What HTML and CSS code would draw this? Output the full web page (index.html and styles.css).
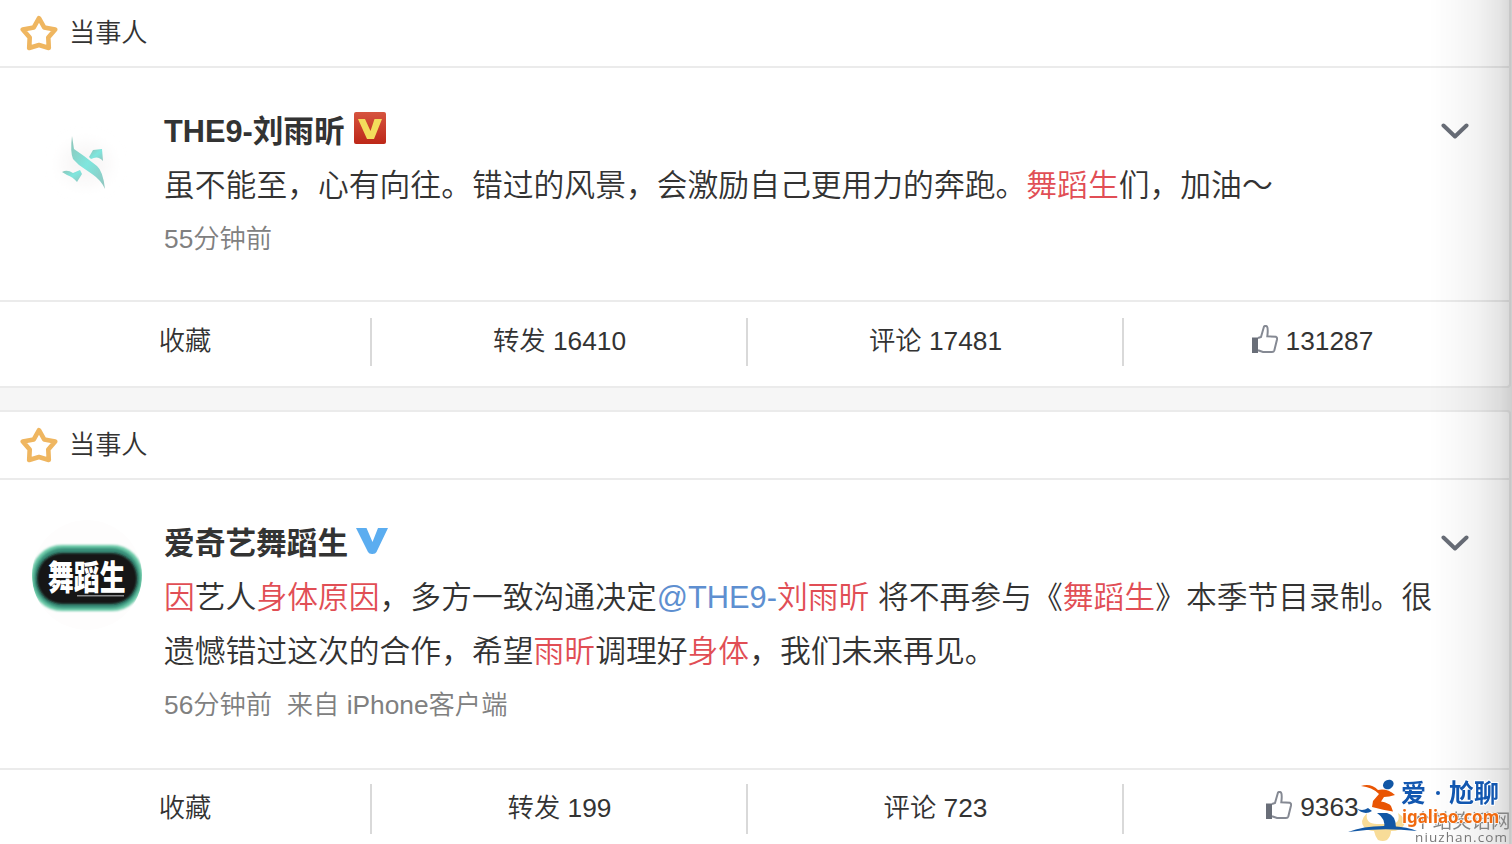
FILE: index.html
```html
<!DOCTYPE html>
<html lang="zh-CN">
<head>
    <meta charset="UTF-8">
    <meta name="viewport" content="width=device-width, initial-scale=1.0">
    <title>微博</title>
    <link rel="stylesheet" href="styles.css">
</head>
<body>

    <!-- Shared icons -->
    <svg class="symbols" width="0" height="0">
        <symbol id="star" viewBox="0 0 38 36">
            <path d="M19 3.2 L24.2 12.4 L35.2 14.6 L28.3 22.6 L28.8 33 L19 30 L9.2 33 L9.7 22.6 L2.8 14.6 L13.8 12.4 Z" fill="none" stroke="#efb660" stroke-width="4.6" stroke-linejoin="round"/>
        </symbol>
        <symbol id="chevron" viewBox="0 0 28 16">
            <path d="M2.5 2.5 L14 13.5 L25.5 2.5" fill="none" stroke="#696e78" stroke-width="4" stroke-linecap="round" stroke-linejoin="round"/>
        </symbol>
        <symbol id="like" viewBox="0 0 26 28">
            <path d="M0 12.5 H6 V28 H0 Z" fill="#696e78"/>
            <path d="M6 13 L9 12 L12 1.5 Q13.5 0.3 15 1.5 Q16.3 3.5 15.3 11.3 L24 11.8 Q25.4 12.5 25 14.5 L22.3 25.5 Q21.8 27 20 27 H11 L6 25.2" fill="#fff" stroke="#858993" stroke-width="2"/>
        </symbol>
    </svg>

    <div class="feed">
        <div class="card">
            <div class="card-title">
                <svg class="star"><use href="#star"/></svg>
                <span>当事人</span>
            </div>
            <div class="card-body">
                <svg class="avatar" viewBox="0 0 110 110">
                    <defs>
                        <linearGradient id="teal" x1="0" y1="0" x2="1" y2="1">
                            <stop offset="0" stop-color="#8fc4b8"/>
                            <stop offset="0.5" stop-color="#7fe6de"/>
                            <stop offset="1" stop-color="#93c4bd"/>
                        </linearGradient>
                        <filter id="soft"><feGaussianBlur stdDeviation="0.7"/></filter>
                        <filter id="haze" x="-50%" y="-50%" width="200%" height="200%"><feGaussianBlur stdDeviation="8"/></filter>
                    </defs>
                    <ellipse cx="54" cy="56" rx="24" ry="20" fill="#f8f6f6" filter="url(#haze)"/>
                    <g fill="url(#teal)" filter="url(#soft)">
                        <path d="M40 28 L42 41 L52 48 L65 58 Q71 63 73 81 Q69 72 60 66 L47 57 L41 51 Q38 44 40 28 Z"/>
                        <path d="M57 49 L61 42 L70 41 L71 53 Q66 47 59 51 Z"/>
                        <path d="M30 64 Q35 61 41 65 L48 62 L50 66 L45 74 Q41 69 35 67 Z"/>
                    </g>
                </svg>
                <div class="post">
                    <div class="name">
                        <span>THE9-刘雨昕</span>
                        <svg class="badge" viewBox="0 0 32 32">
                            <defs>
                                <linearGradient id="red" x1="0" y1="0" x2="0" y2="1">
                                    <stop offset="0" stop-color="#d6543f"/>
                                    <stop offset="1" stop-color="#bd2718"/>
                                </linearGradient>
                            </defs>
                            <rect width="32" height="32" rx="2" fill="url(#red)"/>
                            <path d="M4 7 H11 L16.5 19 L20.5 7 H28 L20 27 H13 Z" fill="#f3dc5c"/>
                        </svg>
                    </div>
                    <div class="text">虽不能至，心有向往。错过的风景，会激励自己更用力的奔跑。<em>舞蹈生</em>们，加油～</div>
                    <div class="from">55分钟前</div>
                </div>
                <svg class="arrow"><use href="#chevron"/></svg>
            </div>
            <div class="actions">
                <div class="action">收藏</div>
                <div class="action">转发 16410</div>
                <div class="action">评论 17481</div>
                <div class="action"><svg class="like"><use href="#like"/></svg>131287</div>
            </div>
        </div>

        <div class="card">
            <div class="card-title">
                <svg class="star"><use href="#star"/></svg>
                <span>当事人</span>
            </div>
            <div class="card-body">
                <svg class="avatar" viewBox="0 0 110 110">
                    <defs>
                        <clipPath id="round"><circle cx="55" cy="55" r="55"/></clipPath>
                        <filter id="edge"><feGaussianBlur stdDeviation="0.9"/></filter>
                    </defs>
                    <g clip-path="url(#round)">
                        <circle cx="55" cy="55" r="55" fill="#fefdfd"/>
                        <rect x="-1" y="25" width="112" height="66" rx="31" fill="#69c8a6" filter="url(#edge)"/>
                        <rect x="2" y="28" width="106" height="60" rx="29" fill="#398d78" filter="url(#edge)"/>
                        <rect x="5" y="33" width="100" height="51" rx="25" fill="#151517" filter="url(#edge)"/>
                        <text class="avatar-text" transform="translate(16 70) scale(0.76 1)">舞蹈生</text>
                        <rect x="45" y="75" width="47" height="1.5" fill="#8a8a8c"/>
                    </g>
                </svg>
                <div class="post">
                    <div class="name">
                        <span>爱奇艺舞蹈生</span>
                        <svg class="badge blue" viewBox="0 0 32 32">
                            <path d="M0 4 H10.5 L16.5 18 L22 4 H32 L20.5 28 Q19.5 30.2 16 30 Q13 30 12 28 Z" fill="#5badf0"/>
                        </svg>
                    </div>
                    <div class="text"><em>因</em>艺人<em>身体原因</em>，多方一致沟通决定<a>@THE9-</a><em>刘雨昕</em> 将不再参与《<em>舞蹈生</em>》本季节目录制。很<br>遗憾错过这次的合作，希望<em>雨昕</em>调理好<em>身体</em>，我们未来再见。</div>
                    <div class="from">56分钟前&nbsp; 来自 iPhone客户端</div>
                </div>
                <svg class="arrow"><use href="#chevron"/></svg>
            </div>
            <div class="actions">
                <div class="action">收藏</div>
                <div class="action">转发 199</div>
                <div class="action">评论 723</div>
                <div class="action"><svg class="like"><use href="#like"/></svg>9363</div>
            </div>
        </div>
    </div>

    <div class="shade"></div>

    <!-- Site watermark in the bottom corner -->
    <svg class="watermark" viewBox="0 0 172 80">
        <path d="M27 49 Q19 57 24 63 Q28 67 34 67 Q35 72 38 76 Q43 78 47 76 Q51 72 51 67 Q61 67 64 61 Q67 55 58 49 Q61 60 50 60 H37 Q25 60 27 49 Z" fill="#f8dc98"/>
        <text class="mark-cn" x="73" y="64">个站笑话网</text>
        <text class="mark-en" x="75" y="78">niuzhan.com</text>
        <ellipse cx="48.3" cy="20.5" rx="5.6" ry="4.5" fill="#1257a5" transform="rotate(-30 48.3 20.5)"/>
        <path d="M21 22 Q31 19 38 26 Q47 24 55 31 Q49 33 44 33 L41 37.5 Q49 39 51 42 L53 47.5 Q43 46 32 43 L33 37 L39 30 Q32 23 21 22 Z" fill="#e95504"/>
        <path d="M16 44 Q22 48 28 44 L32 47 Q24 52 16 44 Z" fill="#1257a5"/>
        <path d="M37 49 H47 Q56 51 56 64 H44 Q46 55 37 49 Z" fill="#1257a5"/>
        <path d="M8 68 Q25 61 50 62 Q69 63 77 67 Q41 63 8 68 Z" fill="#1257a5"/>
        <text class="logo-cn" x="61" y="38">爱</text>
        <circle cx="98" cy="29" r="2" fill="#1257b0"/>
        <text class="logo-cn" x="109" y="38">尬聊</text>
        <text class="logo-en" transform="translate(62 59) scale(0.94 1)">igaliao.com</text>
    </svg>

</body>
</html>
```

FILE: styles.css
```css
body, html {
    margin: 0;
    padding: 0;
    height: 100%;
    overflow: hidden;
    font-family: "Liberation Sans", "Noto Sans CJK SC", sans-serif;
    font-weight: 350;
    color: #333;
    background-color: #f6f6f6;
}

.symbols {
    position: absolute;
}

.feed {
    display: flex;
    flex-direction: column;
    gap: 22px;
}

.card {
    box-sizing: border-box;
    width: 1511px;
    background-color: #fff;
    border: 2px solid #ebebeb;
    border-left: 0;
    border-radius: 0 4px 4px 0;
}

.card:first-child {
    border-top: 0;
    border-top-right-radius: 0;
}

/* Card header */
.card-title {
    display: flex;
    align-items: center;
    gap: 11px;
    height: 66px;
    padding-left: 20px;
    font-size: 26.2px;
    border-bottom: 2px solid #ebebeb;
}

.card-title span {
    padding-bottom: 4px;
}

.star {
    width: 38px;
    height: 36px;
}

/* Post */
.card-body {
    display: flex;
    align-items: flex-start;
    padding: 37px 40px 33px 32px;
    border-bottom: 2px solid #ebebeb;
}

.card:last-child .card-body {
    padding-bottom: 35px;
}

.avatar {
    flex: none;
    width: 110px;
    height: 110px;
    margin: 3px 22px 0 0;
}

.avatar-text {
    font-family: "Noto Sans CJK SC", sans-serif;
    font-size: 34px;
    font-weight: 900;
    fill: #fff;
}

.post {
    flex: 1;
    white-space: nowrap;
    line-height: 54px;
}

.name {
    display: flex;
    height: 54px;
    gap: 9px;
    font-size: 30.7px;
    font-weight: bold;
}

.badge {
    width: 32px;
    height: 32px;
    margin-top: 7px;
}

.badge.blue {
    margin-left: -1px;
}

.text {
    font-size: 30.8px;
}

.text em {
    font-style: normal;
    color: #e14e55;
}

.text a {
    color: #5e8fd0;
}

.from {
    height: 54px;
    margin-top: -1px;
    padding-bottom: 1px;
    font-size: 26.3px;
    color: #808080;
}

.arrow {
    flex: none;
    width: 28px;
    height: 16px;
    margin-top: 18px;
}

/* Bottom buttons */
.actions {
    display: grid;
    grid-template-columns: 372px 376px 376px 376px;
    padding: 16px 0 20px;
}

.card:last-child .actions {
    padding-top: 14px;
}

.action {
    box-sizing: border-box;
    display: flex;
    align-items: center;
    justify-content: center;
    height: 48px;
    padding: 0 0 7px 1px;
    font-size: 26.3px;
    white-space: pre;
    border-right: 2px solid #d9d9d9;
}

.action:first-child {
    padding-left: 0;
}

.action:last-child {
    padding-bottom: 2px;
    border-right: 0;
}

.card:last-child .action {
    height: 50px;
    padding-bottom: 8px;
}

.card:last-child .action:last-child {
    padding-bottom: 4px;
}

.like {
    width: 26px;
    height: 28px;
    margin: 0 8px 4px 0;
}

/* Shadow along the right edge */
.shade {
    position: fixed;
    top: 0;
    right: 0;
    width: 84px;
    height: 100%;
    background: linear-gradient(to right, rgba(0, 0, 0, 0) 0%, rgba(0, 0, 0, 0.02) 30%, rgba(0, 0, 0, 0.05) 60%, rgba(0, 0, 0, 0.1) 85%, rgba(0, 0, 0, 0.16) 100%);
}

.watermark {
    position: fixed;
    right: 0;
    bottom: 0;
    width: 172px;
    height: 80px;
}

.mark-cn {
    font-family: "Noto Sans CJK SC", sans-serif;
    font-size: 19.5px;
    font-weight: 400;
    fill: #858585;
}

.mark-en {
    font-family: "Open Sans", sans-serif;
    font-size: 13.5px;
    font-weight: 400;
    letter-spacing: 1.1px;
    fill: #777;
}

.logo-cn {
    font-family: "Noto Sans CJK SC", sans-serif;
    font-size: 25px;
    font-weight: bold;
    fill: #1257b0;
    stroke: #fff;
    stroke-width: 2px;
    paint-order: stroke;
}

.logo-en {
    font-family: "Noto Sans", sans-serif;
    font-size: 18px;
    font-weight: bold;
    fill: #f06a10;
    stroke: #fff;
    stroke-width: 1.5px;
    paint-order: stroke;
}
```
